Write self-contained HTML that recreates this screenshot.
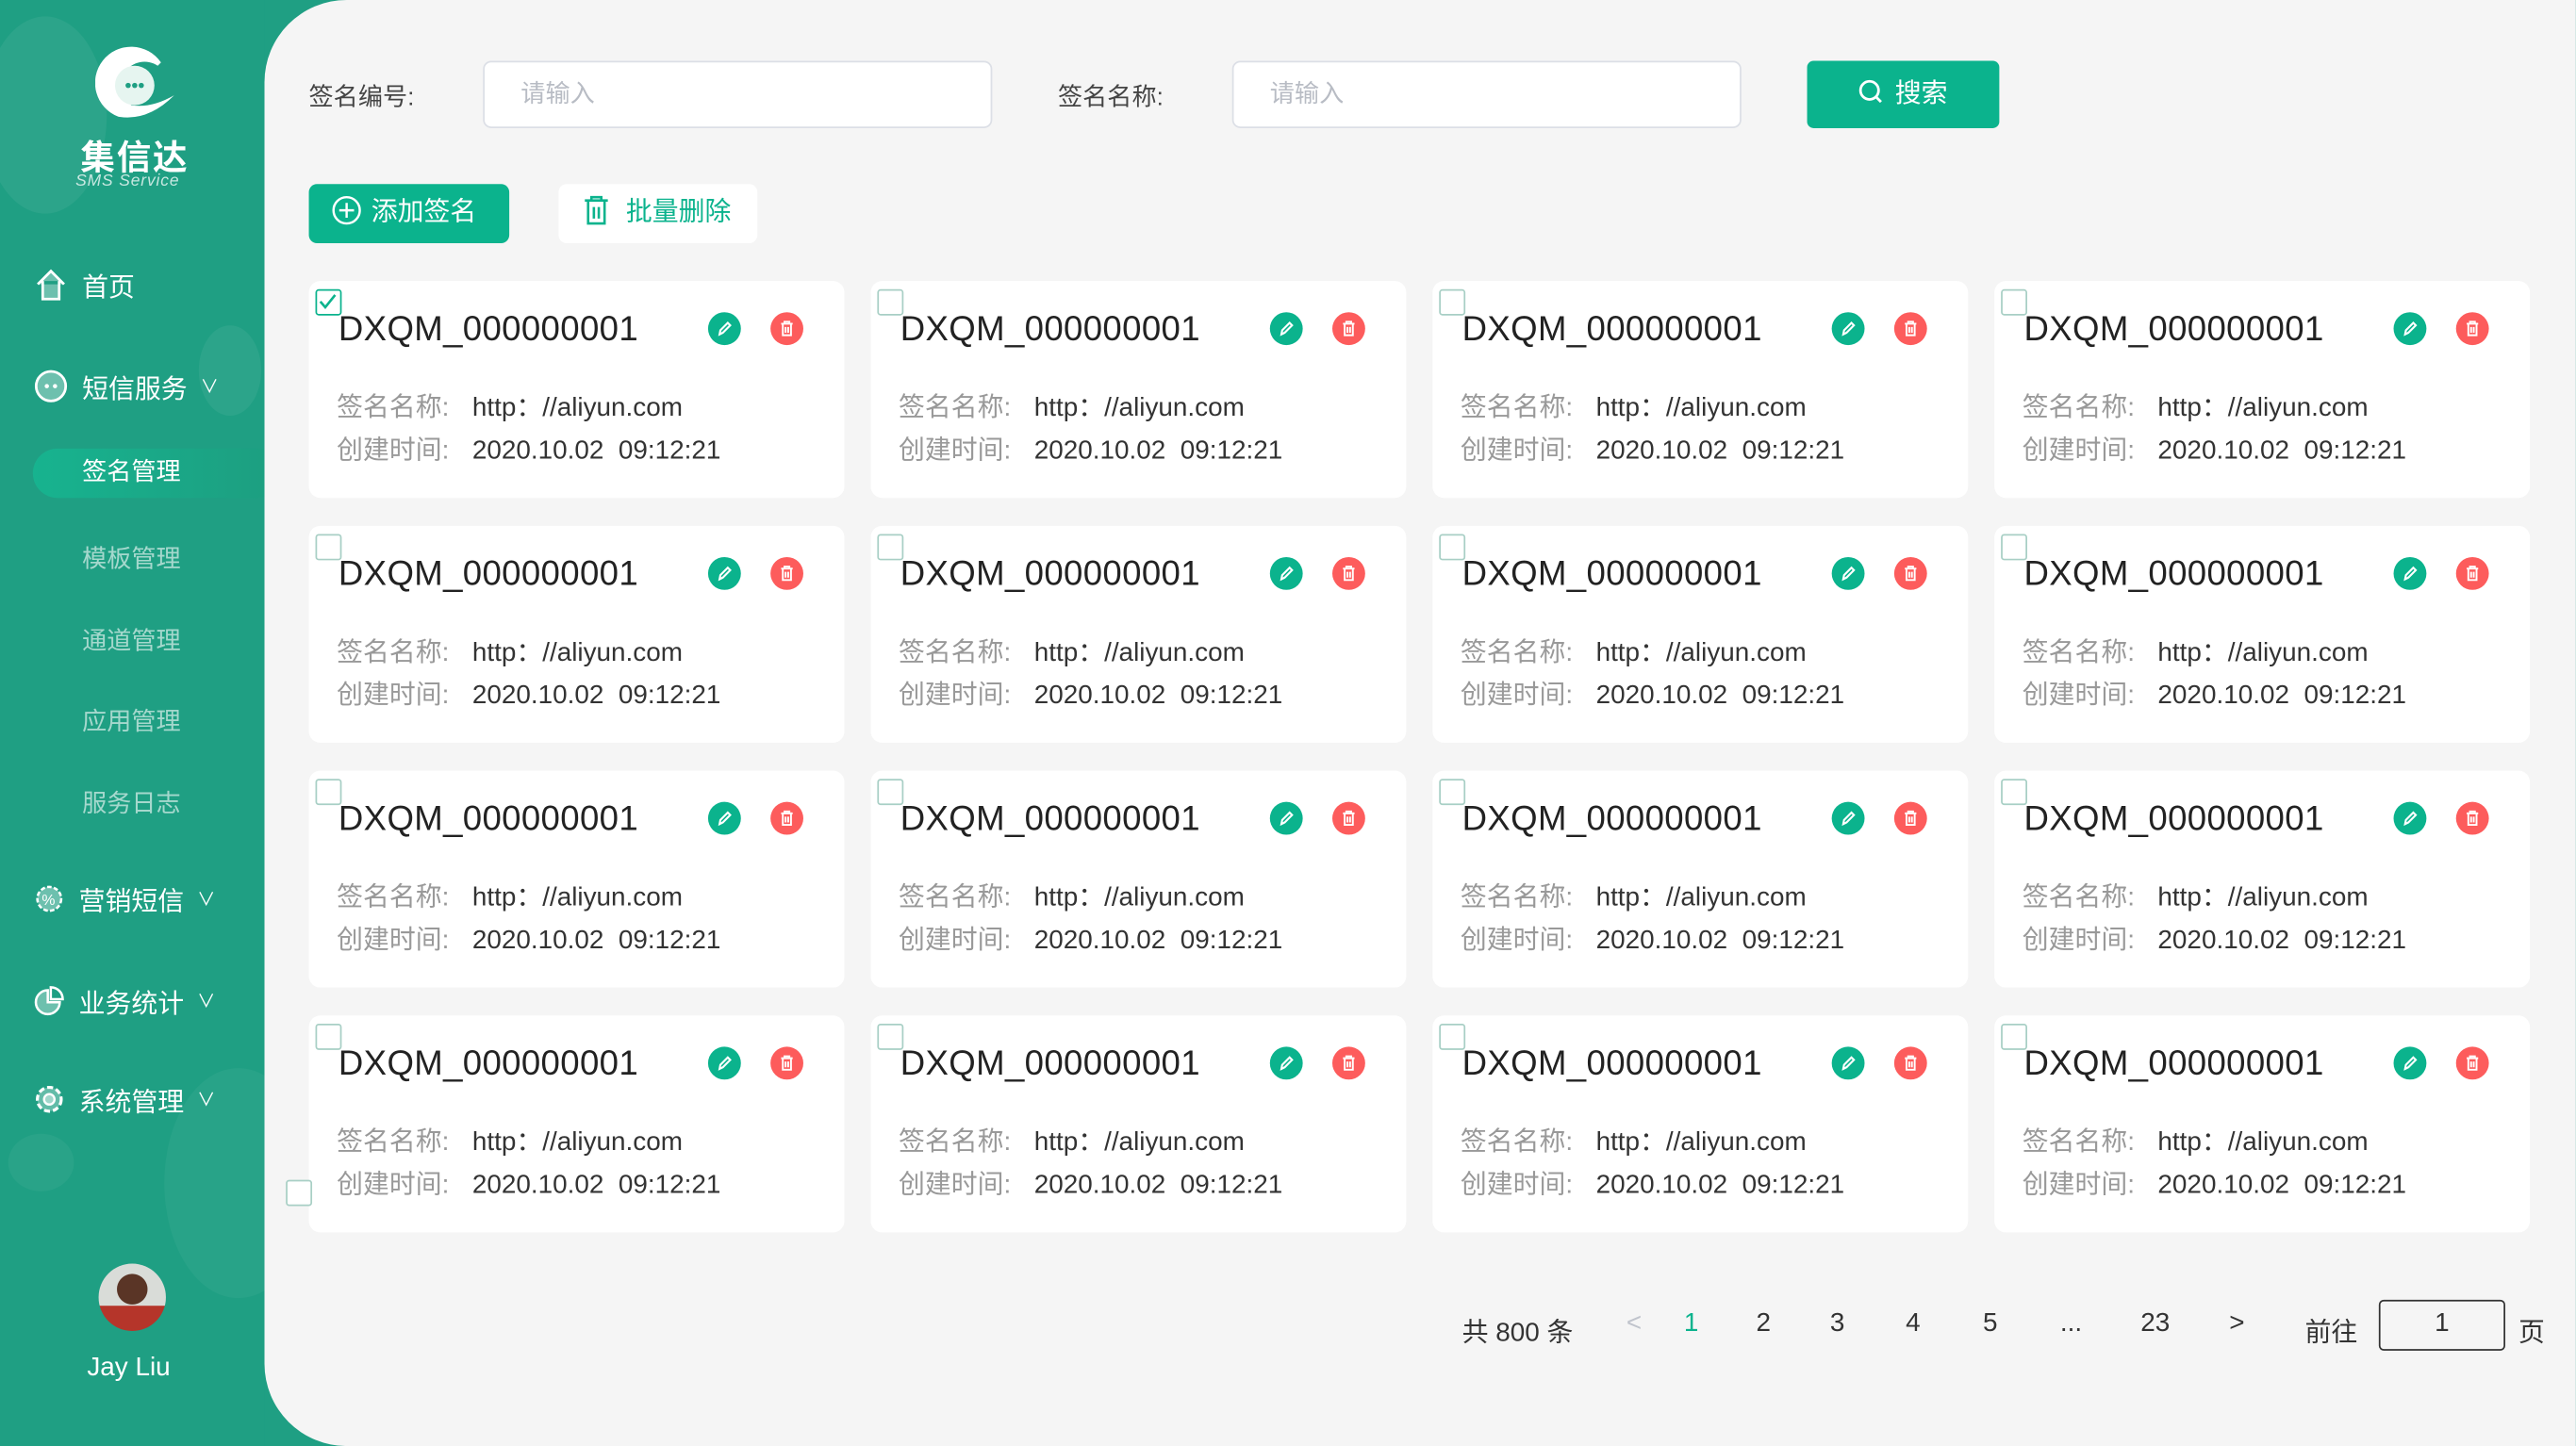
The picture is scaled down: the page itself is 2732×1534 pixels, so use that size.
<!DOCTYPE html>
<html><head><meta charset="utf-8"><style>
*{margin:0;padding:0;box-sizing:border-box}
html,body{width:2732px;height:1534px;overflow:hidden;background:#1f9f83}
#w{position:absolute;left:0;top:0;width:1568px;height:880px;transform:scale(1.7423,1.7432);transform-origin:0 0;font-family:"Liberation Sans","Noto Sans CJK SC",sans-serif;background:#1f9f83;overflow:hidden}
.a{position:absolute}
.side{left:0;top:0;width:161px;height:880px;background:#1f9f83}
.blob{position:absolute;border-radius:50%;background:rgba(255,255,255,.06)}
.main{left:161px;top:0;width:1407px;height:880px;background:#f5f5f5;border-radius:50px 0 0 50px}
.mi{position:absolute;left:20px;color:#fff;font-size:16px;display:flex;align-items:center;gap:8px}
.sub{position:absolute;left:50px;color:rgba(255,255,255,.6);font-size:15px}
.lbl{font-size:15px;color:#444}
.inp{background:#fff;border:1px solid #dcdfe6;border-radius:5px;height:41px;color:#b8bcc4;font-size:15px;padding-left:22px;line-height:39px}
.card{position:absolute;width:326px;height:132px;background:#fff;border-radius:7px}
.cb{position:absolute;left:4px;top:5px;width:16px;height:16px;border:1.5px solid #a8cfc5;border-radius:2px;background:#fff}
.t{position:absolute;left:18px;top:18px;font-size:21px;color:#222;letter-spacing:.2px}
.ic{position:absolute;top:19px;width:20px;height:20px;border-radius:50%}
.r1,.r2{position:absolute;left:17px;font-size:16px;color:#999;white-space:nowrap}
.r1{top:63px}.r2{top:89px}
.r1 b,.r2 b{font-weight:normal;color:#333;margin-left:14px}
.pg{position:absolute;top:797px;font-size:16px;color:#333}
</style></head><body><div id="w">
<div class="a side">
<div class="blob" style="left:-10px;top:10px;width:75px;height:120px"></div>
<div class="blob" style="left:121px;top:198px;width:38px;height:55px"></div>
<div class="blob" style="left:100px;top:650px;width:90px;height:140px;opacity:.7"></div>
<div class="blob" style="left:5px;top:690px;width:40px;height:35px;opacity:.8"></div>
<svg class="a" style="left:58px;top:28px" width="56" height="50" viewBox="0 0 56 50"><path d="M40 10 A22 22 0 1 0 14 43 Q 32 46 48 30 Q 34 38 22 36 A14 14 0 1 1 38 12 Z" fill="#fff"/><circle cx="24" cy="24" r="12" fill="#e6f5f0"/><circle cx="20" cy="24" r="1.6" fill="#1f9f83"/><circle cx="24" cy="24" r="1.6" fill="#1f9f83"/><circle cx="28" cy="24" r="1.6" fill="#1f9f83"/></svg>
<div class="a" style="left:49px;top:80px;color:#fff;font-size:21px;font-weight:bold;letter-spacing:1px">集信达</div>
<div class="a" style="left:46px;top:105px;color:rgba(255,255,255,.75);font-size:10px;font-style:italic;letter-spacing:.5px">SMS Service</div>
<div class="mi" style="top:161px"><svg width="22" height="22" viewBox="0 0 22 22"><path d="M3 11 L11 3 L19 11 M6 9 V20 H16 V9" fill="rgba(255,255,255,.35)" stroke="#fff" stroke-width="1.6"/></svg>首页</div>
<div class="mi" style="top:223px"><svg width="22" height="22" viewBox="0 0 22 22"><circle cx="11" cy="11" r="9" fill="rgba(255,255,255,.35)" stroke="#fff" stroke-width="1.6"/><circle cx="8.5" cy="11" r="1.3" fill="#fff"/><circle cx="13.5" cy="11" r="1.3" fill="#fff"/></svg>短信服务 <span style="font-size:11px">∨</span></div>
<div class="a" style="left:20px;top:273px;width:151px;height:30px;border-radius:15px;background:linear-gradient(90deg,#17b38f,#1d9e80);color:#fff;font-size:15px;line-height:30px;padding-left:30px">签名管理</div>
<div class="sub" style="top:329px">模板管理</div>
<div class="sub" style="top:379px">通道管理</div>
<div class="sub" style="top:428px">应用管理</div>
<div class="sub" style="top:478px">服务日志</div>
<div class="mi" style="top:535px"><svg width="20" height="22" viewBox="0 0 22 22"><circle cx="11" cy="11" r="8" fill="rgba(255,255,255,.35)" stroke="#fff" stroke-width="1.6" stroke-dasharray="3 1.5"/><text x="6" y="15" font-size="10" fill="#fff">%</text></svg>营销短信 <span style="font-size:11px">∨</span></div>
<div class="mi" style="top:597px"><svg width="20" height="22" viewBox="0 0 22 22"><path d="M10 4 A8 8 0 1 0 18 12 H10 Z" fill="rgba(255,255,255,.35)" stroke="#fff" stroke-width="1.6"/><path d="M12 2 A8 8 0 0 1 20 10 H12 Z" fill="none" stroke="#fff" stroke-width="1.6"/></svg>业务统计 <span style="font-size:11px">∨</span></div>
<div class="mi" style="top:657px"><svg width="20" height="22" viewBox="0 0 22 22"><circle cx="11" cy="11" r="8" fill="rgba(255,255,255,.3)" stroke="#fff" stroke-width="2" stroke-dasharray="4 2"/><circle cx="11" cy="11" r="3.5" fill="rgba(255,255,255,.4)" stroke="#fff" stroke-width="1.5"/></svg>系统管理 <span style="font-size:11px">∨</span></div>
<div class="a" style="left:60px;top:769px;width:41px;height:41px;border-radius:50%;background:radial-gradient(circle at 50% 38%,#5a3526 0 28%,transparent 29%),linear-gradient(180deg,#d9dcd8 0 62%,#b5352a 63%);"></div>
<div class="a" style="left:53px;top:824px;color:#fff;font-size:16px">Jay Liu</div>
</div>
<div class="a main"></div>
<div class="a lbl" style="left:188px;top:48px">签名编号:</div>
<div class="a inp" style="left:294px;top:37px;width:310px">请输入</div>
<div class="a lbl" style="left:644px;top:48px">签名名称:</div>
<div class="a inp" style="left:750px;top:37px;width:310px">请输入</div>
<div class="a" style="left:1100px;top:37px;width:117px;height:41px;border-radius:4px;background:#0bb38d;color:#fff;font-size:16px;line-height:41px;text-align:center"><svg width="16" height="16" viewBox="0 0 16 16" style="vertical-align:-2px;margin-right:6px"><circle cx="7" cy="7" r="5.5" fill="none" stroke="#fff" stroke-width="1.6"/><path d="M11 11 L14 14" stroke="#fff" stroke-width="1.6"/></svg>搜索</div>
<div class="a" style="left:188px;top:112px;width:122px;height:36px;border-radius:5px;background:#0bb38d;color:#fff;font-size:16px;line-height:36px;padding-left:14px"><svg width="18" height="18" viewBox="0 0 18 18" style="vertical-align:-3px;margin-right:6px"><circle cx="9" cy="9" r="8" fill="none" stroke="#fff" stroke-width="1.4"/><path d="M9 4.5V13.5M4.5 9H13.5" stroke="#fff" stroke-width="1.4"/></svg>添加签名</div>
<div class="a" style="left:340px;top:112px;width:121px;height:36px;border-radius:5px;background:#fff;color:#0bb38d;font-size:16px;line-height:36px;padding-left:14px"><svg width="18" height="20" viewBox="0 0 18 20" style="vertical-align:-4px;margin-right:9px"><path d="M2 4H16M6 4V2H12V4M4 4V18H14V4M7.5 8V15M10.5 8V15" fill="none" stroke="#0bb38d" stroke-width="1.5"/></svg>批量删除</div>
<div id="cards"></div>
<div class="a" style="left:174px;top:718px;width:16px;height:16px;border:1.5px solid #a8cfc5;border-radius:2px;background:#fff"></div>
<div class="pg" style="left:890px">共 800 条</div>
<div class="pg" style="left:990px;color:#c0c4cc">&lt;</div>
<div class="pg" style="left:1025px;color:#0bb38d">1</div>
<div class="pg" style="left:1069px">2</div>
<div class="pg" style="left:1114px">3</div>
<div class="pg" style="left:1160px">4</div>
<div class="pg" style="left:1207px">5</div>
<div class="pg" style="left:1254px">...</div>
<div class="pg" style="left:1303px">23</div>
<div class="pg" style="left:1357px">&gt;</div>
<div class="pg" style="left:1403px">前往</div>
<div class="a" style="left:1448px;top:791px;width:77px;height:31px;border:1.5px solid #333;border-radius:3px;text-align:center;line-height:28px;font-size:16px;color:#333">1</div>
<div class="pg" style="left:1533px">页</div>
</div>
<script>
var h='',xs=[188,530,872,1214],ys=[171,320,469,618];
for(var r=0;r<4;r++)for(var c=0;c<4;c++){
var chk=(r==0&&c==0);
h+='<div class="card" style="left:'+xs[c]+'px;top:'+ys[r]+'px">'+
'<div class="cb" style="'+(chk?'border-color:#0bb38d':'')+'">'+(chk?'<svg width="13" height="13" viewBox="0 0 13 13"><path d="M2 6.5L5 10L11 2.5" fill="none" stroke="#0bb38d" stroke-width="1.5"/></svg>':'')+'</div>'+
'<div class="t">DXQM_000000001</div>'+
'<div class="ic" style="left:243px;background:#0bb38d"><svg width="20" height="20" viewBox="0 0 20 20"><path d="M7 13.5L7.5 11L12 6.5L13.5 8L9 12.5Z" fill="none" stroke="#fff" stroke-width="1.2"/></svg></div>'+
'<div class="ic" style="left:281px;background:#fd5c5c"><svg width="20" height="20" viewBox="0 0 20 20"><path d="M6.5 7H13.5M8.5 7V5.8H11.5V7M7.5 7V14H12.5V7M9.2 9V12.5M10.8 9V12.5" fill="none" stroke="#fff" stroke-width="1.1"/></svg></div>'+
'<div class="r1">签名名称:<b>http：//aliyun.com</b></div>'+
'<div class="r2">创建时间:<b>2020.10.02&nbsp;&nbsp;09:12:21</b></div></div>';}
document.getElementById('cards').innerHTML=h;
</script>
</body></html>
